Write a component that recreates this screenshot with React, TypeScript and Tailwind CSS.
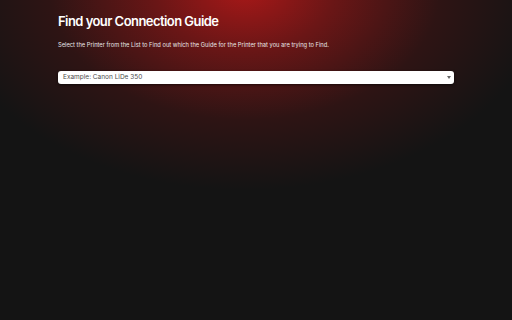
export default function App() {
  return (
    <div
      className="w-[512px] h-[320px] overflow-hidden bg-[#141414]"
      style={{
        backgroundImage:
          "radial-gradient(ellipse 300px 200px at 245px -10px, #a81818 0%, #6a1616 30%, #2e1414 65%, #141414 100%)",
        fontFamily: "Inter, 'Noto Sans', sans-serif",
      }}
    >
      <div className="w-[396px] mx-auto pt-[13px] flex flex-col">
        <h1 className="text-[13px] leading-[16px] font-semibold text-white tracking-[-0.55px]">
          Find your Connection Guide
        </h1>
        <p className="mt-[12px] text-[5.75px] leading-[8px] text-[#e8e8e8]">
          Select the Printer from the List to Find out which the Guide for the Printer that you are trying to Find.
        </p>
        <div className="mt-[22px] relative h-[13px] rounded-[3px] bg-white shadow-[0_1px_3px_rgba(0,0,0,0.6)] flex items-center px-[5px]">
          <span className="text-[6.5px] text-[#4a4a4a]">Example: Canon LiDe 350</span>
          <svg className="absolute right-[3px] top-[5px]" width="4" height="3" viewBox="0 0 4 3">
            <path d="M0 0 L4 0 L2 3 Z" fill="#666" />
          </svg>
        </div>
      </div>
    </div>
  );
}
